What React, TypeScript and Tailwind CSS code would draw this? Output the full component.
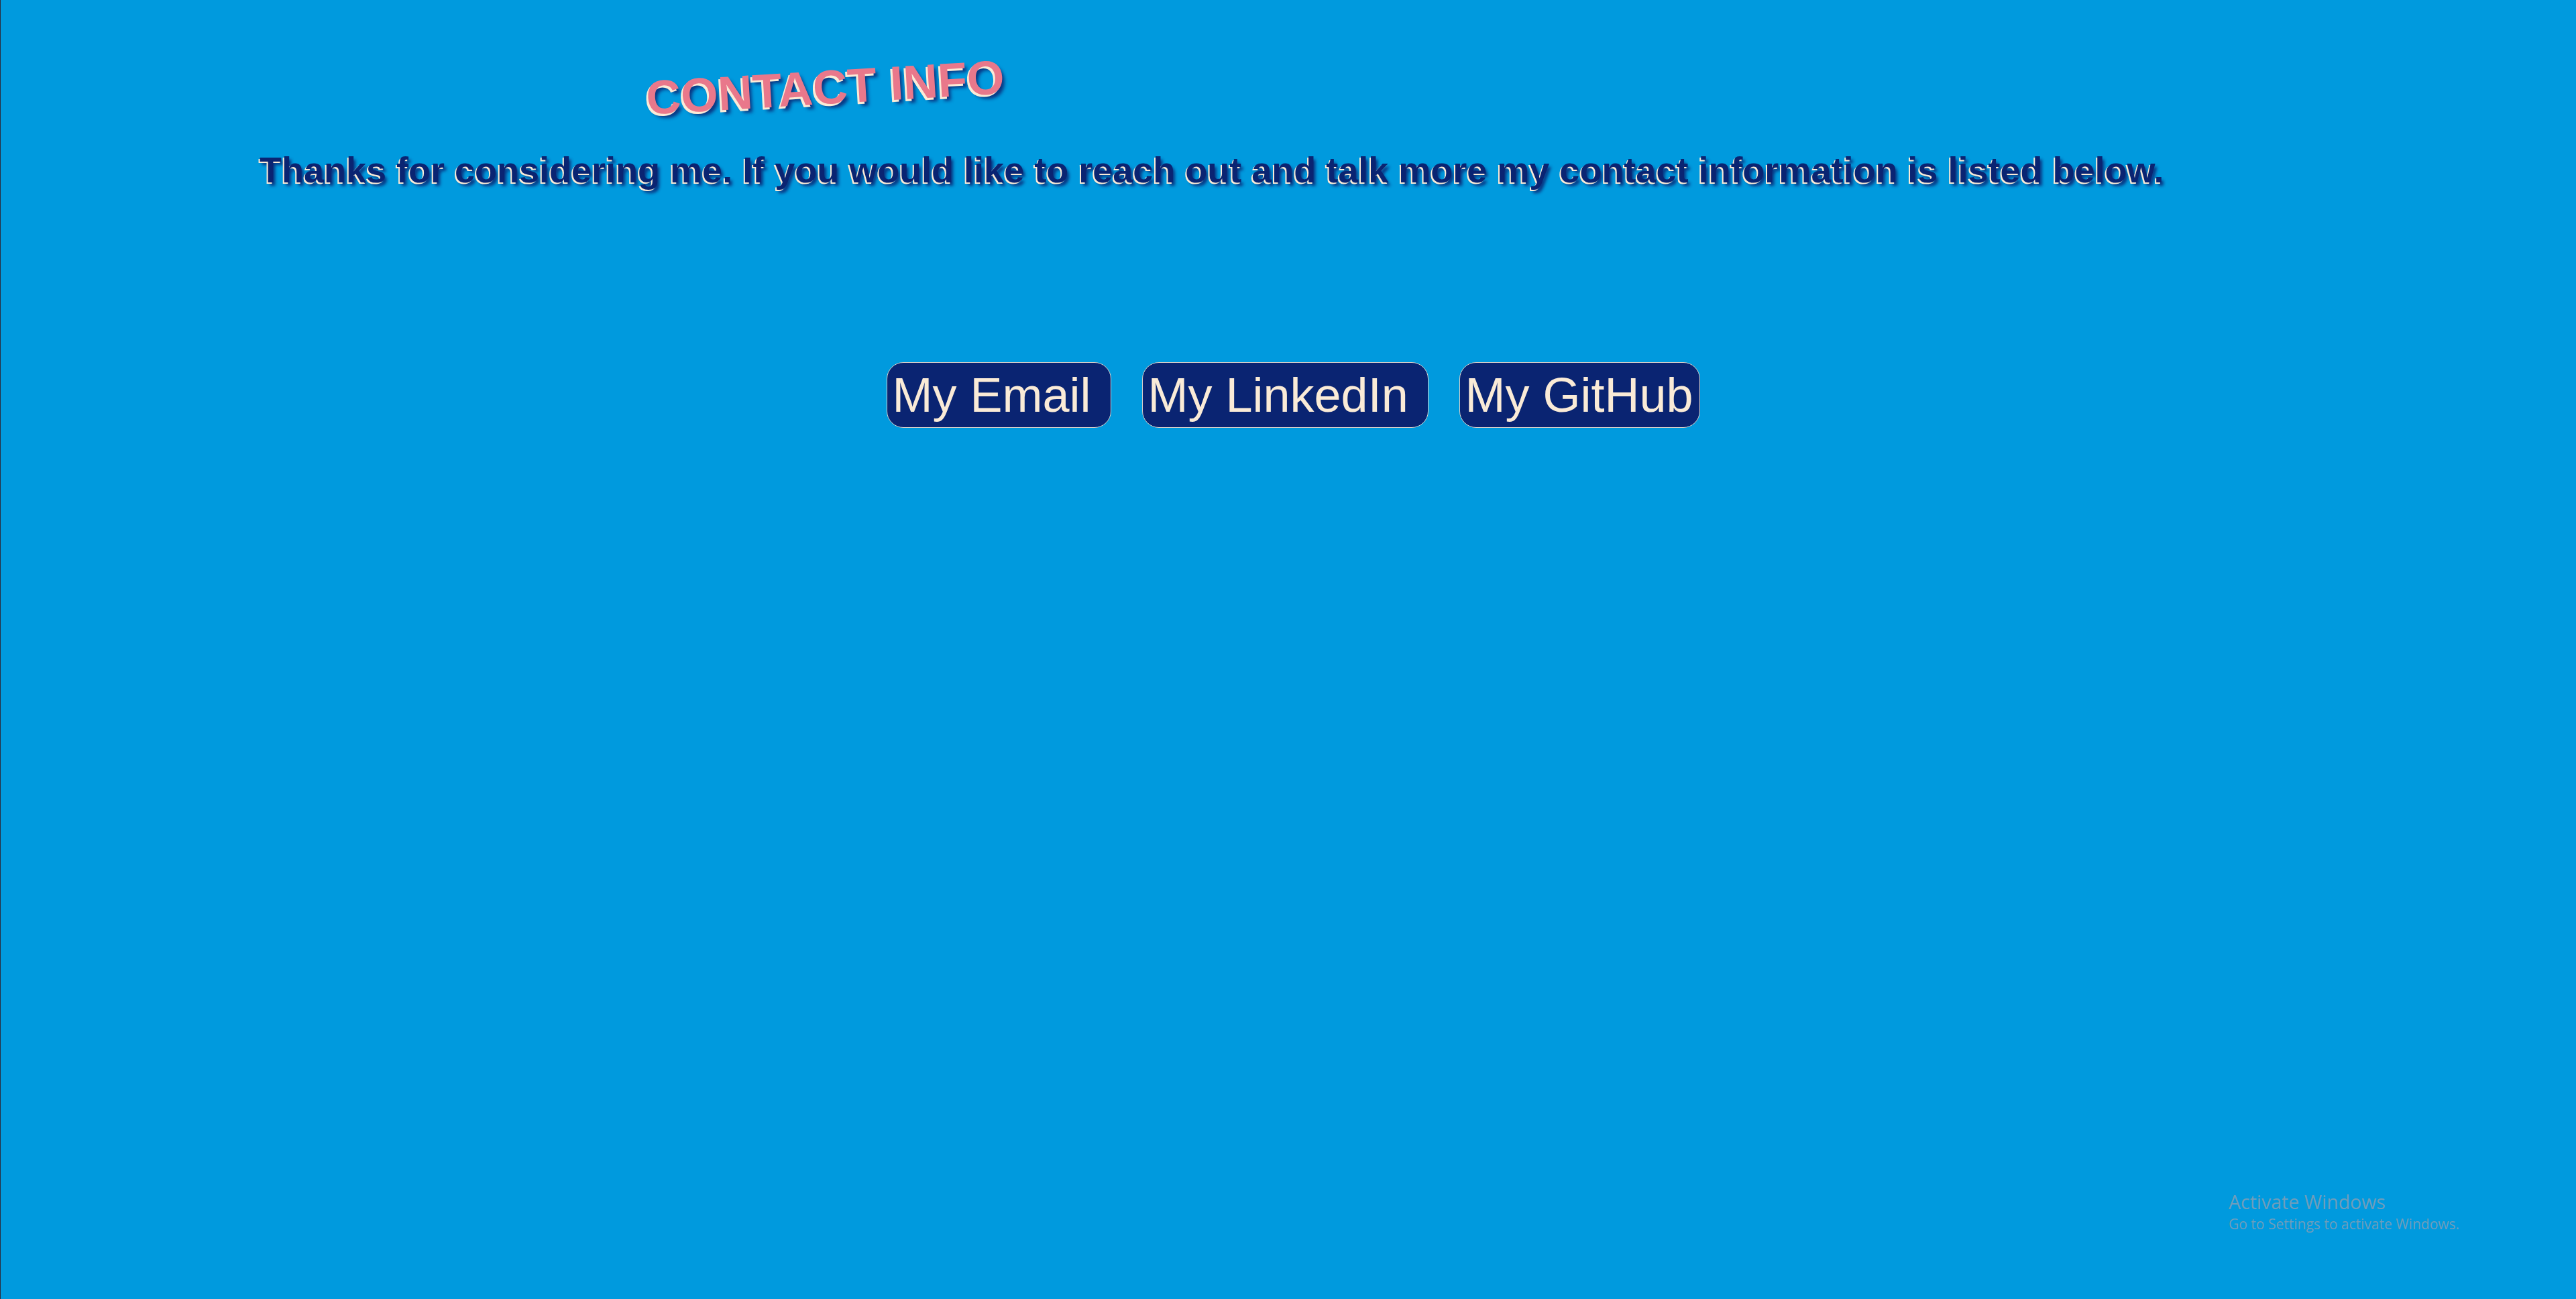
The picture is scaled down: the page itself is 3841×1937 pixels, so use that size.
import { FC } from 'react';

const links = [
  { label: 'My Email', width: 'w-[335px]' },
  { label: 'My LinkedIn', width: 'w-[427px]' },
  { label: 'My GitHub', width: 'w-[359px]' },
];

const ContactButtons: FC = () => {
  return (
    <div className="flex justify-center gap-[46px] pl-[14px] mt-[256px]">
      {links.map((link) => (
        <button
          key={link.label}
          type="button"
          className={`${link.width} text-left px-2 py-[7px] text-[72px] leading-[82px] text-[#faebd7] bg-[#0a2472] border border-[#d8d2cc] rounded-[25px]`}
        >
          {link.label}
        </button>
      ))}
    </div>
  );
};

export default function App() {
  return (
    <div className="relative min-h-screen bg-[#009ade] border-l border-[#2b2b3b] font-['Liberation_Sans',Arial,sans-serif] overflow-hidden">
      <div className="pt-[94px]">
        <h1 className="inline-block ml-[962px] -rotate-[3.4deg] text-[71.5px] leading-[72px] font-bold text-[#e9788b] [text-shadow:-3px_3px_0_#faebd7,3px_6px_5px_rgba(10,36,114,0.85)]">
          CONTACT INFO
        </h1>
      </div>

      <p className="mt-[56px] pl-[386px] text-[54px] leading-[62px] font-bold whitespace-nowrap text-[#0a2472] [text-shadow:-2px_2px_0_#faebd7,3px_5px_4px_rgba(10,36,114,0.85)]">
        Thanks for considering me. If you would like to reach out and talk more my contact information is listed below.
      </p>

      <ContactButtons />

      <div className="absolute left-[3322px] top-[1773px] font-['Open_Sans',sans-serif] text-[#6f9dbb]">
        <div className="text-[28.5px] leading-[38px]">Activate Windows</div>
        <div className="text-[21px] leading-[28px]">Go to Settings to activate Windows.</div>
      </div>
    </div>
  );
}
